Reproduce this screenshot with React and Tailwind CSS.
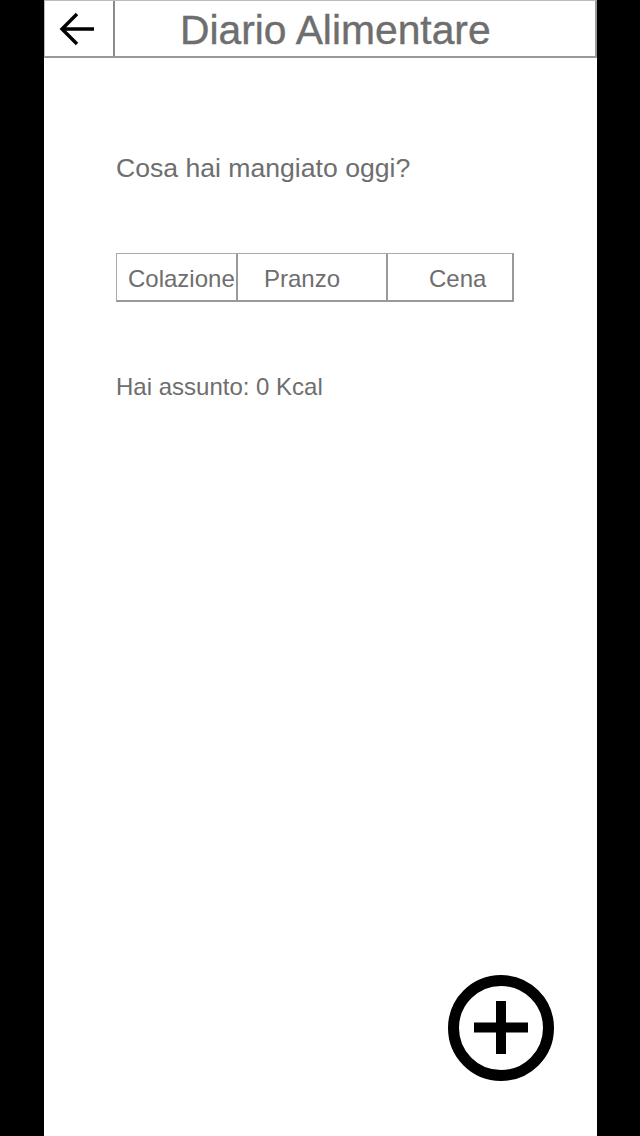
import React from "react";

const font = { fontFamily: '"Liberation Sans", Arial, sans-serif' };

export default function App() {
  return (
    <div className="min-h-screen w-full bg-black" style={font}>
      <div className="relative ml-[44px] w-[553px] min-h-[1136px] bg-white">
        {/* Header */}
        <div className="flex h-[58px] border-t border-l border-[#bbbbbb] border-r-2 border-b-2 border-r-[#999999] border-b-[#999999]">
          <div className="flex w-[70px] shrink-0 items-center border-r-2 border-[#8a8a8a]">
            <svg width="68" height="56" viewBox="0 0 68 56">
              <path d="M32 13 L17 28 L32 43 M17 28 L49 28" fill="none" stroke="#000" strokeWidth="3.4" strokeLinejoin="miter" />
            </svg>
          </div>
          <div className="flex flex-1 items-center pl-[65px] pt-[3px]">
            <span className="text-[40.8px] leading-none text-[#6e6e6e] [-webkit-text-stroke:0.4px_#6e6e6e]">Diario Alimentare</span>
          </div>
        </div>

        <div className="pl-[72px]">
          <p className="mt-[95px] text-[26.6px] leading-[30px] text-[#6e6e6e]">Cosa hai mangiato oggi?</p>

          <div className="mt-[70px] flex h-[49px] w-[398px] border-t border-l border-[#aaaaaa] border-r-2 border-b-2 border-r-[#999999] border-b-[#999999] text-[24px] text-[#6e6e6e]">
            <div className="flex w-[121px] items-center border-r-2 border-[#999999] pl-[11px] pt-[3px]">Colazione</div>
            <div className="flex w-[150px] items-center border-r-2 border-[#999999] pl-[26px] pt-[3px]">Pranzo</div>
            <div className="flex flex-1 items-center pl-[41px] pt-[3px]">Cena</div>
          </div>

          <p className="mt-[71px] text-[24px] leading-[28px] text-[#6e6e6e]">Hai assunto: 0 Kcal</p>
        </div>

        {/* Floating add button */}
        <button className="absolute left-[402px] top-[973px] h-[110px] w-[110px]" aria-label="Aggiungi">
          <svg width="110" height="110" viewBox="0 0 110 110">
            <circle cx="55" cy="55" r="47.5" fill="none" stroke="#000" strokeWidth="11" />
            <path d="M28 54.5 H82 M55 28 V81" stroke="#000" strokeWidth="10" />
          </svg>
        </button>
      </div>
    </div>
  );
}
